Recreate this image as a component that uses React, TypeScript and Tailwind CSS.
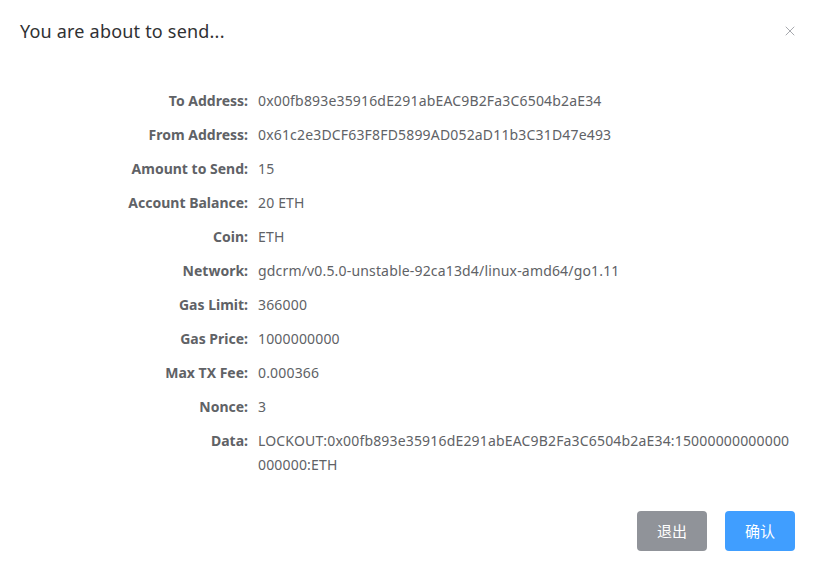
import { X } from "lucide-react";

const rows: { label: string; value: string }[] = [
  { label: "To Address:", value: "0x00fb893e35916dE291abEAC9B2Fa3C6504b2aE34" },
  { label: "From Address:", value: "0x61c2e3DCF63F8FD5899AD052aD11b3C31D47e493" },
  { label: "Amount to Send:", value: "15" },
  { label: "Account Balance:", value: "20 ETH" },
  { label: "Coin:", value: "ETH" },
  { label: "Network:", value: "gdcrm/v0.5.0-unstable-92ca13d4/linux-amd64/go1.11" },
  { label: "Gas Limit:", value: "366000" },
  { label: "Gas Price:", value: "1000000000" },
  { label: "Max TX Fee:", value: "0.000366" },
  { label: "Nonce:", value: "3" },
  {
    label: "Data:",
    value: "LOCKOUT:0x00fb893e35916dE291abEAC9B2Fa3C6504b2aE34:15000000000000000000:ETH",
  },
];

export default function App() {
  return (
    <div
      className="w-[818px] h-[574px] bg-white flex flex-col"
      style={{ fontFamily: '"Noto Sans", "Noto Sans CJK SC", sans-serif' }}
    >
      {/* Header */}
      <div className="flex items-center justify-between pl-5 pr-[20px] pt-[19px]">
        <h2 className="text-[18px] leading-6 tracking-[0.2px] text-[#303133]">You are about to send...</h2>
        <X className="w-4 h-4 text-[#909399]" strokeWidth={1.2} />
      </div>

      {/* Body */}
      <div className="flex flex-col gap-[10px] pt-[46px] pr-[25px]">
        {rows.map((row) => (
          <div key={row.label} className="flex text-[14px] leading-6 text-[#606266]">
            <div className="w-[248px] shrink-0 text-right font-bold">{row.label}</div>
            <div className="pl-[10px] flex-1 break-all tracking-[0.17px]">{row.value}</div>
          </div>
        ))}
      </div>

      {/* Footer */}
      <div className="flex justify-end gap-[18px] pr-[23px] mt-auto mb-[23px]">
        <button className="w-[70px] h-10 rounded bg-[#909399] text-white text-[15px]">退出</button>
        <button className="w-[70px] h-10 rounded bg-[#409eff] text-white text-[15px]">确认</button>
      </div>
    </div>
  );
}
